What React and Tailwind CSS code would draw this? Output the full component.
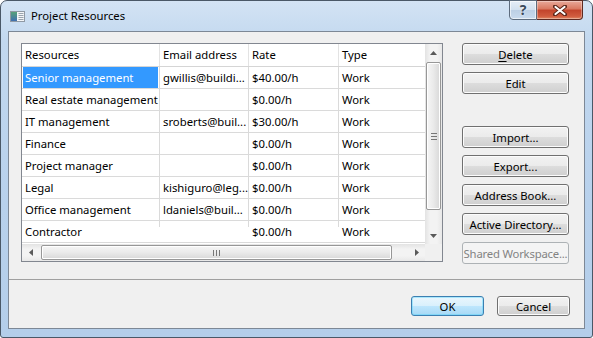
import React from "react";

const rows = [
  ["Senior management", "gwillis@buildi...", "$40.00/h", "Work"],
  ["Real estate management", "", "$0.00/h", "Work"],
  ["IT management", "sroberts@buil...", "$30.00/h", "Work"],
  ["Finance", "", "$0.00/h", "Work"],
  ["Project manager", "", "$0.00/h", "Work"],
  ["Legal", "kishiguro@leg...", "$0.00/h", "Work"],
  ["Office management", "ldaniels@buil...", "$0.00/h", "Work"],
  ["Contractor", "", "$0.00/h", "Work"],
];

const colW = ["w-[138px]", "w-[89px]", "w-[90px]", "flex-1"];

function Btn({ children, disabled, def, className = "" }) {
  const base = disabled
    ? "border-[#adb2b5] bg-[#f4f4f4] text-[#838383] tracking-[-0.2px]"
    : def
    ? "border-[#3c7fb1] bg-[linear-gradient(to_bottom,#eaf6fd_0%,#d9f0fc_50%,#bee6fd_50%,#a7d9f5_100%)] shadow-[inset_0_0_0_1px_#48d2fb66] text-black"
    : "border-[#707070] bg-[linear-gradient(to_bottom,#f2f2f2_0%,#ebebeb_50%,#dddddd_50%,#cfcfcf_100%)] shadow-[inset_0_0_0_1px_#fcfcfc] text-black";
  return (
    <div
      className={`flex items-center justify-center rounded-[3px] border text-[11.3px] leading-none whitespace-nowrap pt-[1px] ${base} ${className}`}
    >
      {children}
    </div>
  );
}

function Tri({ dir }) {
  const pts = {
    up: "0,4 3.5,0 7,4",
    down: "0,0 7,0 3.5,4",
    left: "4,0 4,7 0,3.5",
    right: "0,0 0,7 4,3.5",
  }[dir];
  const vert = dir === "up" || dir === "down";
  return (
    <svg width={vert ? 7 : 4} height={vert ? 4 : 7} viewBox={vert ? "0 0 7 4" : "0 0 4 7"}>
      <polygon points={pts} fill="#5a5a5a" />
    </svg>
  );
}

export default function App() {
  return (
    <div className="w-[593px] h-[338px] font-['Noto_Sans',sans-serif] text-black">
      <div className="w-[593px] h-[338px] flex flex-col border border-[#4a5867] rounded-t-[7px] rounded-b-[3px] bg-[linear-gradient(to_bottom,#d3e3f4_0%,#c2d8ef_12%,#b8d1ec_60%,#b4ceea_100%)] px-[7px] pb-[8px]">
        {/* Title bar */}
        <div className="h-[30px] flex items-start -mx-[7px] px-[9px]">
          <div className="flex items-center h-[31px] gap-[5px]">
            <svg width="16" height="16" viewBox="0 0 16 16">
              <rect x="0.5" y="2.5" width="14" height="10" fill="#f4f6f8" stroke="#8f99a4" />
              <rect x="1" y="3" width="6" height="9" fill="url(#g1)" />
              <rect x="8.5" y="4" width="5" height="1" fill="#9aa4ae" />
              <rect x="8.5" y="6" width="5" height="1" fill="#9aa4ae" />
              <rect x="8.5" y="8" width="5" height="1" fill="#9aa4ae" />
              <rect x="8.5" y="10" width="5" height="1" fill="#9aa4ae" />
              <defs>
                <linearGradient id="g1" x1="0" y1="0" x2="0" y2="1">
                  <stop offset="0" stopColor="#57a27a" />
                  <stop offset="1" stopColor="#3f6fb0" />
                </linearGradient>
              </defs>
            </svg>
            <span className="text-[11.3px] text-black">Project Resources</span>
          </div>
          <div className="ml-auto flex -mt-[1px]">
            <div className="w-[28px] h-[20px] border border-[#5d6c7e] rounded-bl-[4px] bg-[linear-gradient(to_bottom,#e6eef7_0%,#d2e0ef_50%,#bccfe4_50%,#c9dbee_100%)] shadow-[inset_0_0_0_1px_#ffffff99] flex items-center justify-center">
              <span className="text-[14px] font-bold leading-none text-[#3a4a5c] [text-shadow:0_0_2px_#fff]">?</span>
            </div>
            <div className="w-[46px] h-[20px] border border-l-0 border-[#5d2a22] rounded-br-[4px] bg-[linear-gradient(to_bottom,#e9a99a_0%,#d9775f_45%,#c2432b_50%,#d15c3f_85%,#e08a66_100%)] shadow-[inset_0_0_0_1px_#ffffff55] flex items-center justify-center">
              <svg width="14" height="11" viewBox="0 0 14 11">
                <path d="M2 1.5 L12 9.5 M12 1.5 L2 9.5" stroke="#5a2418" strokeWidth="4" strokeLinecap="round" />
                <path d="M2.5 2 L11.5 9 M11.5 2 L2.5 9" stroke="#ffffff" strokeWidth="2.2" strokeLinecap="round" />
              </svg>
            </div>
          </div>
        </div>

        {/* Client area */}
        <div className="flex-1 flex flex-col border border-[#7d8896] bg-[#f0f0f0]">
          <div className="h-[248px] border-b border-[#a0a0a0] flex pl-[12px] pt-[11px]">
            {/* List */}
            <div className="w-[422px] h-[219px] border border-[#828790] bg-white flex flex-col">
              <div className="flex flex-1 min-h-0">
                <div className="w-[403px] flex flex-col">
                  <div className="h-[23px] flex border-b border-[#d5d5d5] text-[11.3px]">
                    {["Resources", "Email address", "Rate", "Type"].map((h, i) => (
                      <div
                        key={h}
                        className={`${colW[i]} ${i < 3 ? "border-r border-[#e3e3e3]" : ""} flex items-center pl-[3px] pt-[1px] whitespace-nowrap overflow-hidden`}
                      >
                        {h}
                      </div>
                    ))}
                  </div>
                  {rows.map((r, ri) => {
                    const last = ri === rows.length - 1;
                    return (
                      <div key={ri} className="h-[22px] flex border-b border-[#dadada] text-[11.3px]">
                        {r.map((c, ci) => (
                          <div
                            key={ci}
                            className={`${colW[ci]} ${ci < 3 && !last ? "border-r border-[#dadada]" : ""} flex whitespace-nowrap overflow-hidden`}
                          >
                            {ri === 0 && ci === 0 ? (
                              <div className="flex-1 mx-[1px] bg-[#3399ff] text-white flex items-center pl-[2px] pt-[1px]">
                                {c}
                              </div>
                            ) : (
                              <div className="flex-1 flex items-center pl-[3px] pt-[1px]">{c}</div>
                            )}
                            {last && ci < 3 ? (
                              <div className="self-start w-px h-[6px] bg-[#dadada]" />
                            ) : null}
                          </div>
                        ))}
                      </div>
                    );
                  })}
                </div>
                {/* vertical scrollbar */}
                <div className="w-[17px] flex flex-col bg-[linear-gradient(to_right,#e3e3e3,#f3f3f3_30%,#f3f3f3_70%,#e8e8e8)]">
                  <div className="h-[17px] flex items-center justify-center">
                    <Tri dir="up" />
                  </div>
                  <div className="flex-1 flex flex-col px-[1px] pt-[1px]">
                    <div className="h-[148px] rounded-[2px] border border-[#979797] bg-[linear-gradient(to_right,#f6f6f6,#eaeaea_50%,#d8d8d8)] shadow-[inset_0_0_0_1px_#ffffff] flex flex-col items-center justify-center gap-[2px]">
                      <div className="w-[6px] h-px bg-[#777]" />
                      <div className="w-[6px] h-px bg-[#777]" />
                      <div className="w-[6px] h-px bg-[#777]" />
                    </div>
                  </div>
                  <div className="h-[17px] flex items-center justify-center">
                    <Tri dir="down" />
                  </div>
                </div>
              </div>
              {/* horizontal scrollbar */}
              <div className="h-[17px] flex">
                <div className="flex-1 flex bg-[linear-gradient(to_bottom,#e3e3e3,#f3f3f3_30%,#f3f3f3_70%,#e8e8e8)]">
                  <div className="w-[17px] flex items-center justify-center">
                    <Tri dir="left" />
                  </div>
                  <div className="flex-1 flex py-[1px] pl-[2px]">
                    <div className="w-[351px] rounded-[2px] border border-[#979797] bg-[linear-gradient(to_bottom,#f6f6f6,#eaeaea_50%,#d8d8d8)] shadow-[inset_0_0_0_1px_#ffffff] flex items-center justify-center gap-[2px]">
                      <div className="w-px h-[6px] bg-[#777]" />
                      <div className="w-px h-[6px] bg-[#777]" />
                      <div className="w-px h-[6px] bg-[#777]" />
                    </div>
                  </div>
                  <div className="w-[17px] flex items-center justify-center">
                    <Tri dir="right" />
                  </div>
                </div>
                <div className="w-[17px] bg-[#f0f0f0]" />
              </div>
            </div>
            {/* Right buttons */}
            <div className="ml-[19px] w-[107px] flex flex-col">
              <Btn className="h-[22px]">
                <span><span className="underline underline-offset-2">D</span>elete</span>
              </Btn>
              <Btn className="h-[22px] mt-[7px]">Edit</Btn>
              <Btn className="h-[22px] mt-[32px]">Import...</Btn>
              <Btn className="h-[22px] mt-[7px]">Export...</Btn>
              <Btn className="h-[22px] mt-[7px]">Address Book...</Btn>
              <Btn className="h-[22px] mt-[7px]">Active Directory...</Btn>
              <Btn disabled className="h-[22px] mt-[7px]">Shared Workspace...</Btn>
            </div>
          </div>
          <div className="flex-1 flex justify-end items-start pt-[16px] pr-[14px] gap-[13px]">
            <Btn def className="w-[73px] h-[20px]">OK</Btn>
            <Btn className="w-[73px] h-[20px]">Cancel</Btn>
          </div>
        </div>
      </div>
    </div>
  );
}
